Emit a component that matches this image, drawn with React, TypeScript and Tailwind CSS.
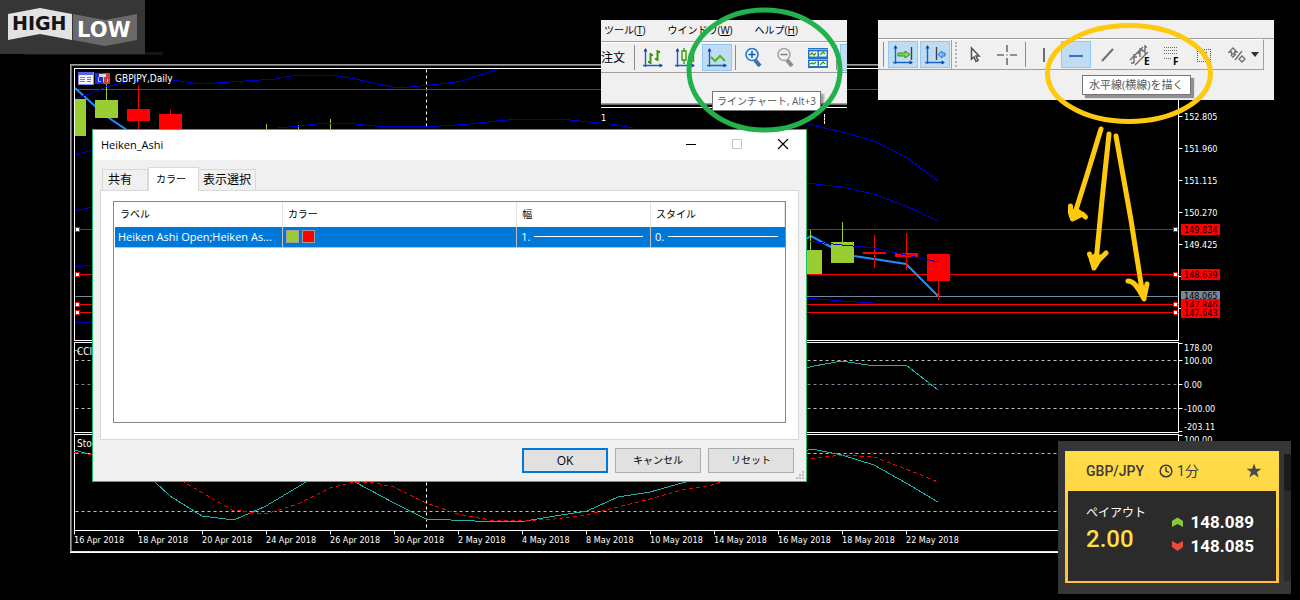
import React from "react";
import { Clock } from "lucide-react";
import clsx from "clsx";

const GREEN = "#9acd32";
const TEAL = "#20b2aa";

interface Candle {
  x: number;
  top: number;
  bottom: number;
  high?: number;
  low?: number;
  up?: boolean;
}

const candles: Candle[] = [
  { x: 74, top: 99, bottom: 136, up: true },
  { x: 106, top: 100, bottom: 118, high: 84, up: true },
  { x: 138, top: 109, bottom: 121, high: 85, low: 150 },
  { x: 170, top: 114, bottom: 150, high: 110 },
  { x: 266, top: 150, bottom: 170, high: 124, up: true },
  { x: 298, top: 150, bottom: 170, high: 125, up: true },
  { x: 330, top: 150, bottom: 170, high: 119, up: true },
  { x: 810, top: 250, bottom: 274, high: 230, up: true },
  { x: 842, top: 242, bottom: 263, high: 222, up: true },
  { x: 874, top: 252, bottom: 254, high: 235, low: 268 },
  { x: 906, top: 253, bottom: 257, high: 233, low: 270 },
  { x: 938, top: 254, bottom: 281, low: 300 },
];

const bands = [
  "75,99 92,93 106,87 125,82 148,79 172,80 200,84 245,81 275,79 296,75 333,75 360,80 392,87 410,87 440,84 462,81 480,75 498,69",
  "278,128 300,126 325,123 347,123 375,126 440,126 470,124 495,121 520,119 560,119 600,123 617,125 633,128",
  "770,120 808,124 842,132 874,141 906,157 938,181",
  "806,183 842,187 874,194 906,206 938,221",
  "806,241 842,245 874,248 906,255 938,262",
  "806,298 842,301 874,303 938,303",
  "75,155 100,148",
  "75,211 100,205",
  "75,267 100,264",
  "75,323 100,322",
];

const dates = [
  "16 Apr 2018", "18 Apr 2018", "20 Apr 2018", "24 Apr 2018", "26 Apr 2018",
  "30 Apr 2018", "2 May 2018", "4 May 2018", "8 May 2018", "10 May 2018",
  "14 May 2018", "16 May 2018", "18 May 2018", "22 May 2018",
];

const scale = [
  { label: "152.805", y: 116 },
  { label: "151.960", y: 148 },
  { label: "151.115", y: 180 },
  { label: "150.270", y: 212 },
  { label: "149.425", y: 244 },
  { label: "100.00", y: 360 },
  { label: "0.00", y: 384 },
  { label: "-100.00", y: 408 },
];

const priceTags = [
  { label: "149.834", y: 229 },
  { label: "148.639", y: 274 },
  { label: "147.846", y: 304 },
  { label: "147.643", y: 312 },
];

const Chart: React.FC = () => (
  <svg
    width={1230}
    height={490}
    viewBox="70 64 1230 490"
    className="block shrink-0 font-['DejaVu_Sans_Condensed','DejaVu_Sans',sans-serif] text-[9px]"
    role="img"
    aria-label="GBPJPY,Daily"
  >
    {/* Window frame */}
    <g shapeRendering="crispEdges">
      <rect x="70" y="64" width="1170" height="1" fill="#a0a0a0" />
      <rect x="70" y="65" width="1170" height="1" fill="#696969" />
      <rect x="70" y="64" width="1" height="488" fill="#a0a0a0" />
      <rect x="71" y="65" width="1" height="486" fill="#696969" />
      <rect x="71" y="551" width="1169" height="1" fill="#e3e3e3" />
      <rect x="70" y="552" width="1170" height="1" fill="#ffffff" />
    </g>

    {/* Panels and levels */}
    <g transform="translate(0.5 0.5)" fill="none" stroke="#ffffff">
      <rect x="74" y="68" width="1104" height="272" />
      <rect x="74" y="342" width="1104" height="90" />
      <rect x="74" y="434" width="1104" height="96" />
      <path d="M426 69V340M426 342V432M426 434V530" strokeDasharray="3 3" />
      <g stroke="#c0c0c0" strokeDasharray="3 3">
        <path d="M75 360H1178M75 408H1178M75 453H1178M75 511H1178" />
        <path d="M75 384H1178" stroke="#778899" />
      </g>
      <path d="M1178 343h4M1178 431h4M1178 435h4M1178 276h4M1178 308h4" />
      {scale.map((s) => (
        <path key={s.label} d={`M1178 ${s.y}h4`} />
      ))}
      {dates.map((d, i) => (
        <path key={d} d={`M${74 + i * 64} 530v4`} />
      ))}
      <path d="M75 296H1178" stroke="#778899" />
      <path d="M75 89H1178M75 229H1178M75 274H1178M75 304H1178M75 312H1178" stroke="#ff0000" />
    </g>

    {/* Heiken Ashi */}
    <g fill="none" stroke="#1e90ff" strokeWidth="2">
      <polyline points="75,88 106,116 130,132" />
      <polyline points="800,243 811,236 831,247 854,256 874,259 906,264 938,296" />
    </g>
    <g shapeRendering="crispEdges">
      {candles.map((c) => (
        <g key={c.x} fill={c.up ? GREEN : "#ff0000"}>
          <rect x={Math.max(75, c.x - 11)} y={c.top} width={c.x === 74 ? 11 : 23} height={c.bottom - c.top} />
          {c.high && <rect x={c.x} y={c.high} width="1" height={c.top - c.high} />}
          {c.low && <rect x={c.x} y={c.bottom} width="1" height={c.low - c.bottom} />}
        </g>
      ))}
    </g>
    <g fill="none" stroke="#0000cd" shapeRendering="crispEdges">
      {bands.map((p) => (
        <polyline key={p} points={p} />
      ))}
    </g>

    {/* CCI and stochastic */}
    <g fill="none" stroke={TEAL} shapeRendering="crispEdges">
      <polyline points="75,350 80,352" />
      <polyline points="806,368 814,366 842,361 874,366 906,365 938,390" />
      <polyline points="74,450 92,455 130,466 155,482 170,496 202,516 234,520 266,506 306,482 330,472 355,482 394,503 426,519 475,521 525,521 555,516 587,511 618,497 650,492 682,483 740,470 780,458 812,449 842,455 874,465 906,483 938,502" />
      <polyline
        stroke="#ff0000"
        strokeDasharray="4 3"
        points="74,452 92,455 150,466 184,482 232,510 266,514 298,504 330,488 354,482 370,482 394,487 426,503 458,514 490,520 522,521 554,519 586,515 618,507 650,499 682,490 712,485 740,476 806,459 842,455 874,457 906,469 938,482"
      />
    </g>

    {/* Line handles */}
    <g fill="#ffffff" stroke="#ff0000">
      {priceTags.map((t) => (
        <React.Fragment key={t.label}>
          <rect x="75.5" y={t.y - 1.5} width="4" height="4" />
          <rect x="1173.5" y={t.y - 1.5} width="4" height="4" />
        </React.Fragment>
      ))}
    </g>

    {/* Labels */}
    <g fill="#ffffff">
      {scale.map((s) => (
        <text key={s.label} x="1184" y={s.y + 4}>{s.label}</text>
      ))}
      <text x="1184" y="351">178.00</text>
      <text x="1184" y="430">-203.11</text>
      <text x="1184" y="443">100.00</text>
      {dates.map((d, i) => (
        <text key={d} x={74 + i * 64} y="543">{d}</text>
      ))}
      <text x="77" y="355" className="text-[10px]">CCI</text>
      <text x="77" y="447" className="text-[10px]">Stoch</text>
      <text x="115" y="82" className="text-[10px]">GBPJPY,Daily</text>
    </g>
    <rect x="1181" y="291" width="39" height="11" fill="#778899" />
    <text x="1184" y="299" fill="#000000">148.065</text>
    {priceTags.map((t) => (
      <g key={t.label}>
        <rect x="1181" y={t.y - 5} width="39" height="11" fill="#ff0000" />
        <text x="1184" y={t.y + 4} fill="#000000">{t.label}</text>
      </g>
    ))}

    {/* Data window and one-click icons */}
    <g shapeRendering="crispEdges">
      <rect x="78" y="72" width="15" height="12" fill="#f4f4ff" stroke="#8c8cff" />
      <rect x="78" y="72" width="15" height="3" fill="#5a64e6" />
      <path d="M80 77h5M80 79h5M80 81h5" stroke="#e0604a" />
      <path d="M87 77h4M87 79h4M87 81h4" stroke="#5878e8" />
      <rect x="95" y="73" width="8" height="11" fill="#1c2cdc" />
      <rect x="103" y="73" width="7" height="11" fill="#d03c30" />
      <path d="M98 77v4M98 81h3" stroke="#a8b4ff" />
      <rect x="99" y="74" width="7" height="3" fill="#d8d8d8" />
      <path d="M103 77v5M107 79v3" stroke="#f0c0b8" />
    </g>
  </svg>
);

const Logo: React.FC = () => (
  <svg
    width={163}
    height={55}
    className="block font-['DejaVu_Sans',sans-serif] font-bold"
    role="img"
    aria-label="HIGH LOW"
  >
    <rect x="25" y="52" width="138" height="3" fill="#141414" />
    <rect width="145" height="54" fill="#363636" />
    <path d="M8 14 40 8l32 6v26l-32-6-32 6z" fill="#e2e2e2" />
    <path d="M73 14l32 6 32-6v26l-32 6-32-6z" fill="#696969" />
    <text x="12" y="30" fontSize="19" fill="#141414">HIGH</text>
    <text x="77" y="37" fontSize="21" fill="#ffffff">LOW</text>
  </svg>
);

interface ToolProps {
  label: string;
  active?: boolean;
  children: React.ReactNode;
}

const Tool: React.FC<ToolProps> = ({ label, active, children }) => (
  <button
    type="button"
    aria-label={label}
    className={clsx(
      "flex h-[27px] w-[30px] shrink-0 items-center justify-center border",
      active ? "border-[#90c8f6] bg-[#c0dcf3]" : "border-transparent"
    )}
  >
    <svg width={24} height={24} viewBox="0 0 24 24" fill="none" className="shrink-0">
      {children}
    </svg>
  </button>
);

const Sep: React.FC<{ className?: string }> = ({ className = "mx-[3px]" }) => (
  <span className={clsx("h-[25px] w-px shrink-0 bg-[#8c8c8c]", className)} />
);

const Axes = () => (
  <>
    <path d="M4.5 3v18M2 19.5h19" stroke="#1464c8" strokeWidth="1.4" />
    <path d="M2.5 5.5l2-3.5 2 3.5zM18.5 17.5l3.5 2-3.5 2z" fill="#0a46aa" />
  </>
);

const ChartToolbar: React.FC = () => (
  <div className="absolute left-[601px] top-[20px] w-[246px] bg-black">
    <div className="overflow-hidden border-b border-[#696969] bg-[#f0f0f0] text-black">
      <nav className="flex h-[22px] items-center gap-[22px] border-b border-[#a0a0a0] pl-[3px] text-[10px]">
        <button type="button">ツール(<u>T</u>)</button>
        <button type="button">ウインドウ(<u>W</u>)</button>
        <button type="button">ヘルプ(<u>H</u>)</button>
      </nav>
      <div className="flex h-[31px] items-center gap-[2px] border-y border-t-white border-b-[#a0a0a0]">
        <button type="button" className="w-[30px] shrink-0 text-left text-[12px]">注文</button>
        <Sep className="mx-px" />
        <Tool label="バーチャート">
          <Axes />
          <path d="M9.5 7v11M9.5 16H7M9.5 9H12M16.5 4v11M16.5 13H14M16.5 6H19" stroke="#3c960a" strokeWidth="2" />
        </Tool>
        <Tool label="ローソク足">
          <Axes />
          <path d="M11 2v3M11 14v4M18.5 5v3M18.5 15v3" stroke="#3c960a" strokeWidth="1.4" />
          <path d="M9 5h4v9H9zM16.500 8h4v7h-4z" fill="#e8ffe0" stroke="#3c960a" strokeWidth="1.4" />
        </Tool>
        <Tool label="ラインチャート" active>
          <Axes />
          <path d="M6 11l4 4 5-5 5 5" stroke="#46be0a" strokeWidth="2" />
        </Tool>
        <Sep className="mx-px" />
        <Tool label="ズームイン">
          <path d="M13 14l5 6" stroke="#466ea0" strokeWidth="4" />
          <circle cx="10" cy="8.5" r="6" fill="#e6f4ff" stroke="#1e78d2" strokeWidth="1.6" />
          <path d="M10 5v7M6.500 8.500h7" stroke="#1450aa" strokeWidth="1.4" />
        </Tool>
        <Tool label="ズームアウト">
          <path d="M13 14l5 6" stroke="#8c8c8c" strokeWidth="4" />
          <circle cx="10" cy="8.500" r="6" fill="#f0f0f0" stroke="#a5a5a5" strokeWidth="1.6" />
          <path d="M6.500 8.500h7" stroke="#787878" strokeWidth="1.4" />
        </Tool>
        <Tool label="ウィンドウを並べる">
          <rect x="2" y="2" width="20" height="20" fill="#2373c8" />
          <path d="M3.500 5.500h8v5h-8zM13 5.500h7.500v5H13zM3.500 15h8v5h-8zM13 15h7.500v5H13z" fill="#ffffff" />
          <path d="M2 3.500h20M2 13.500h20" stroke="#78b4f0" />
          <path d="M4 9l2-2 2 2 2-2M14 9l3-3 2 2M4 18l2-1 2 1 2-2M14 19l3-3 2 2" stroke="#46960a" strokeWidth="1.4" />
        </Tool>
        <Sep className="mx-px" />
        <span className="h-[27px] w-[30px] shrink-0 border border-[#90c8f6] bg-[#c0dcf3]" />
      </div>
      <div className="h-[31px] border-b border-[#a0a0a0]" />
    </div>
    <div className="mt-[2px] flex h-[17px] items-end justify-between border-t border-white bg-black pr-[22px] font-['DejaVu_Sans_Condensed','DejaVu_Sans',sans-serif] text-[9px] leading-[12px] text-white">
      <span>1</span>
      <span className="h-[10px] border-l border-dashed border-white" />
    </div>
    <div className="absolute left-[111px] top-[71px] whitespace-nowrap border border-[#767676] bg-white px-[4px] text-[10px] leading-[18px] text-[#575757] shadow-[3px_3px_2px_rgba(0,0,0,0.35)]">
      ラインチャート, Alt+3
    </div>
  </div>
);

const DrawToolbar: React.FC = () => (
  <div className="absolute left-[878px] top-[20px] h-[80px] w-[396px] bg-[#f0f0f0]">
    <div className="h-[19px] border-b border-[#a0a0a0]" />
    <div className="flex h-[31px] w-[386px] items-center border-y border-r border-t-white border-b-[#a0a0a0] border-r-[#a0a0a0] pl-[2px]">
      <Sep />
      <div className="ml-px flex gap-[2px]">
        <Tool label="チャートの端をシフト" active>
          <Axes />
          <path d="M20.500 4v13" stroke="#404040" strokeWidth="1.4" />
          <path d="M7 10h7V8l5 3.500-5 3.500v-2H7z" fill="#7bdc50" stroke="#329614" />
        </Tool>
        <Tool label="自動スクロール" active>
          <Axes />
          <path d="M13.500 4v13" stroke="#404040" strokeWidth="1.4" />
          <path d="M15 11.500L19 8v2h3v3h-3v2z" fill="#8cc0fa" stroke="#1e6edc" />
        </Tool>
      </div>
      <span className="ml-px h-full w-px bg-[#a0a0a0]" />
      <span className="mx-[3px] h-[25px] border-l-2 border-dotted border-[#b4b4b4]" />
      <div className="flex gap-[2px]">
        <Tool label="カーソル">
          <path d="M8.500 5v11l2.500-2 2 4.500 2-1-2-4.500h3z" fill="#ffffff" stroke="#555555" strokeWidth="1.6" />
        </Tool>
        <Tool label="十字カーソル">
          <path d="M12 2v7M12 15v7M2 12h7M15 12h7M11.500 12h1" stroke="#6e6e6e" strokeWidth="1.6" />
        </Tool>
      </div>
      <Sep />
      <div className="flex gap-[2px]">
        <Tool label="垂直線">
          <path d="M12 5v14" stroke="#6e6e6e" strokeWidth="2" />
        </Tool>
        <Tool label="水平線" active>
          <path d="M5 13h14" stroke="#3c6ebe" strokeWidth="2" />
        </Tool>
        <Tool label="トレンドライン">
          <path d="M6 18L17 6" stroke="#6e6e6e" strokeWidth="2" />
        </Tool>
        <Tool label="等距離チャネル">
          <path d="M2 17L15 4M7 22L20 9M6 11v9M3 20h3M6 14h3M12 5v9M9 10h3M12 7h3M17 2v9M14 8h3M17 4h2" stroke="#6e6e6e" strokeWidth="1.4" />
          <text x="16" y="22" fontSize="10" fontWeight="bold" fill="#000000">E</text>
        </Tool>
        <Tool label="フィボナッチ">
          <path d="M4 4.500h14M4 7.500h14M4 10.500h14M4 15.500h8" stroke="#6e6e6e" strokeDasharray="1 1" />
          <text x="13" y="22" fontSize="10" fontWeight="bold" fill="#000000">F</text>
        </Tool>
        <Tool label="テキスト">
          <rect x="5.500" y="6.500" width="13" height="12" stroke="#505050" strokeDasharray="1 1" shapeRendering="crispEdges" />
          <path d="M9 9.500h6M12 9.500V16" stroke="#787878" strokeWidth="1.4" />
        </Tool>
        <Tool label="図形">
          <path d="M9 5l4 4h-2.500v2h-3V9H5zM11 17l7-9M18 13l3 3-3 3-3-3zM7 12l2 2 3-3" stroke="#6e6e6e" strokeWidth="1.3" />
        </Tool>
      </div>
      <svg width={8} height={5} className="shrink-0">
        <path d="M0 0h8L4 5z" fill="#303030" />
      </svg>
    </div>
    <div className="absolute left-[204px] top-[55px] whitespace-nowrap border border-[#767676] bg-white px-[6px] text-[11px] leading-[18px] text-[#575757] shadow-[3px_3px_1px_rgba(0,0,0,0.4)]">
      水平線(横線)を描く
    </div>
  </div>
);

const StyleLine: React.FC<{ label: string }> = ({ label }) => (
  <div className="flex items-center gap-[4px] pl-[4px] pr-[7px]">
    <span>{label}</span>
    <span className="h-px flex-1 bg-white" />
  </div>
);

const IndicatorDialog: React.FC = () => {
  const tab = "border border-b-0 border-[#d9d9d9] text-left";
  const button = "h-[25px] w-[86px] bg-[#e1e1e1]";

  return (
    <section
      role="dialog"
      aria-labelledby="dialog-title"
      className="absolute left-[92px] top-[129px] w-[715px] border border-[#17c06b] bg-[#f0f0f0] text-[11px] text-black"
    >
      <header className="flex h-[30px] items-center justify-between bg-white pl-[8px] pr-[17px]">
        <h1 id="dialog-title">Heiken_Ashi</h1>
        <div className="flex gap-[34px]">
          <button type="button" aria-label="最小化">
            <svg width={12} height={12} className="block"><path d="M1 5.500h10" stroke="#000000" /></svg>
          </button>
          <button type="button" aria-label="最大化" disabled>
            <svg width={12} height={12} className="block"><rect x="1.500" y="0.500" width="9" height="9" fill="none" stroke="#c8c8c8" /></svg>
          </button>
          <button type="button" aria-label="閉じる">
            <svg width={12} height={12} className="block"><path d="M1 0l10 10M11 0L1 10" stroke="#000000" strokeWidth="1.2" /></svg>
          </button>
        </div>
      </header>

      <div className="px-[7px] pt-[7px]">
        <div role="tablist" className="flex items-end pl-[2px]">
          <button type="button" role="tab" aria-selected="false" className={clsx(tab, "h-[21px] w-[46px] pl-[5px] text-[12px]")}>
            共有
          </button>
          <button type="button" role="tab" aria-selected="true" className={clsx(tab, "-mb-px h-[24px] w-[51px] bg-white pl-[7px] text-[10px]")}>
            カラー
          </button>
          <button type="button" role="tab" aria-selected="false" className={clsx(tab, "h-[21px] w-[57px] border-l-0 pl-[4px] text-[12px]")}>
            表示選択
          </button>
        </div>

        <div role="tabpanel" className="border border-[#d9d9d9] bg-white px-[12px] pb-[16px] pt-[10px]">
          <div className="h-[222px] border border-[#828790] pl-px">
            <table className="w-full table-fixed border-collapse text-left">
              <colgroup>
                <col className="w-[25%]" />
                <col className="w-[35%]" />
                <col className="w-[20%]" />
                <col className="w-[20%]" />
              </colgroup>
              <thead>
                <tr className="h-[25px] text-[10px]">
                  {["ラベル", "カラー", "幅", "スタイル"].map((h) => (
                    <th key={h} scope="col" className="border-r border-[#e5e5e5] p-0 pl-[5px] font-normal">{h}</th>
                  ))}
                </tr>
              </thead>
              <tbody>
                <tr className="h-[20px] border-b border-[#c0c0c0] bg-[#0078d7] text-white">
                  <td className="truncate border-r border-[#c0c0c0] p-0 pl-[3px]">Heiken Ashi Open;Heiken As...</td>
                  <td className="border-r border-[#c0c0c0] p-0">
                    <div className="flex gap-[3px] pl-[3px]">
                      <span className="size-[13px] border border-[#a0a0a0] bg-[#9acd32]" />
                      <span className="size-[13px] border border-[#a0a0a0] bg-[#ff0000]" />
                    </div>
                  </td>
                  <td className="border-r border-[#c0c0c0] p-0"><StyleLine label="1." /></td>
                  <td className="p-0"><StyleLine label="0." /></td>
                </tr>
              </tbody>
            </table>
          </div>
        </div>
      </div>

      <footer className="flex justify-end gap-[7px] pb-[8px] pr-[12px] pt-[8px]">
        <button type="button" className={clsx(button, "border-2 border-[#0078d7] text-[12px]")}>OK</button>
        <button type="button" className={clsx(button, "border border-[#adadad] text-[10px]")}>キャンセル</button>
        <button type="button" className={clsx(button, "border border-[#adadad] text-[10px]")}>リセット</button>
      </footer>
      <svg width={8} height={8} className="absolute bottom-[2px] right-[2px]" fill="#bfbfbf">
        <path d="M6 0h2v2H6zM3 3h2v2H3zM6 3h2v2H6zM0 6h2v2H0zM3 6h2v2H3zM6 6h2v2H6z" />
      </svg>
    </section>
  );
};

const PayoutCard: React.FC = () => (
  <article className="absolute left-[1058px] top-[441px] w-[233px] bg-[#363636] pb-[11px] pl-[7px] pr-[12px] pt-[10px] font-['Roboto','Noto_Sans_CJK_JP',sans-serif]">
    <span className="absolute right-0 top-[13px] h-[37px] w-[7px] bg-[#1c1b19]" />
    <span className="absolute right-0 top-[50px] h-[90px] w-[7px] bg-[#2a2a2a]" />
    <div className="bg-linear-to-b from-[#ffdf49] to-[#ffc03a] px-[3px] pb-[2px]">
      <header className="flex h-[40px] items-center pl-[18px] pr-[14px] text-[14px] text-[#3b3b3b]">
        <h2 className="font-medium">GBP/JPY</h2>
        <Clock className="ml-[15px] mr-[4px] size-[14px]" strokeWidth={2.5} />
        <span>1分</span>
        <button type="button" aria-label="お気に入り" className="ml-auto">
          <svg width={16} height={16} viewBox="0 0 16 16" className="block">
            <path d="M8 0.500l1.900 5.300h5.600L11 9.100l1.700 5.400L8 11.300l-4.700 3.200L5 9.100 0.500 5.800h5.600z" fill="#4a4a4a" />
          </svg>
        </button>
      </header>
      <div className="flex h-[90px] justify-between bg-[#2b2b2b] pl-[18px] pr-[22px] pt-[13px]">
        <div>
          <p className="text-[12px] leading-[18px] text-white">ペイアウト</p>
          <p className="text-[24px] font-medium leading-[34px] text-[#ffdf45]">2.00</p>
        </div>
        <div className="pt-[6px] text-[17px] font-bold leading-[24px] text-white">
          <p className="flex items-center gap-[8px]">
            <svg width={11} height={10}><path d="M0 4l5.500-3.500L11 4v6L5.500 7 0 10z" fill="#8cc63f" /></svg>
            148.089
          </p>
          <p className="flex items-center gap-[8px]">
            <svg width={11} height={10}><path d="M0 0l5.500 3L11 0v6L5.500 10 0 6z" fill="#e84c3d" /></svg>
            148.085
          </p>
        </div>
      </div>
    </div>
  </article>
);

/** Hand-drawn circles and arrows over the toolbars and chart */
const Marks: React.FC = () => (
  <svg
    width={1300}
    height={600}
    className="pointer-events-none absolute left-0 top-0"
    fill="none"
    strokeWidth="5"
    strokeLinecap="round"
    strokeLinejoin="round"
    aria-hidden="true"
  >
    <ellipse cx="764.500" cy="70" rx="75.500" ry="60" stroke="#22b14c" />
    <g stroke="#ffc90e">
      <ellipse cx="1129" cy="73.500" rx="81.500" ry="48" />
      <path d="M1101 129L1087 175 1075 213M1070.500 206v7l2 6 6-3 4-2 3 3" />
      <path d="M1109 134L1102 200 1096 262M1089.500 254l2 5 2.500 9 4-7 8-8" />
      <path d="M1116 136L1131 220 1142 290M1128 281c5 0 9 4 16 18M1147 284l-3 14" />
      <path d="M1072 216l4-6 4 3zM1092 261l3-5 5 1-4 8zM1137 287l6 1 1 7z" fill="#ffc90e" />
    </g>
  </svg>
);

export default function App() {
  return (
    <main className="relative min-h-screen w-full overflow-hidden bg-black font-['Open_Sans','Noto_Sans_CJK_JP',sans-serif]">
      <div className="h-[64px]">
        <Logo />
      </div>
      <div className="flex pl-[70px]">
        <Chart />
      </div>
      <ChartToolbar />
      <DrawToolbar />
      <IndicatorDialog />
      <PayoutCard />
      <Marks />
    </main>
  );
}
